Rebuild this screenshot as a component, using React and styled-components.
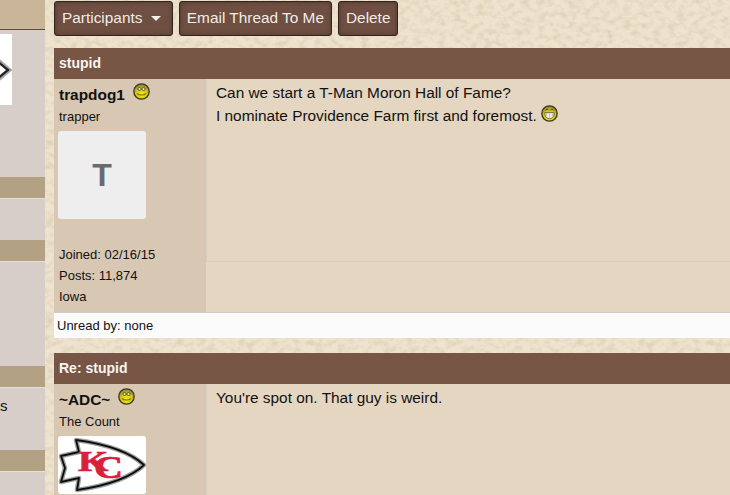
import React from "react";
import styled, { createGlobalStyle } from "styled-components";

const paper = `url("data:image/svg+xml,%3Csvg xmlns='http://www.w3.org/2000/svg' width='400' height='400'%3E%3Cfilter id='n' x='0' y='0' width='100%25' height='100%25'%3E%3CfeTurbulence type='fractalNoise' baseFrequency='0.13 0.17' numOctaves='3' seed='7' stitchTiles='stitch'/%3E%3CfeColorMatrix values='0 0 0 0 0.72 0 0 0 0 0.62 0 0 0 0 0.45 2 0 0 0 -0.82'/%3E%3C/filter%3E%3Crect width='400' height='400' fill='%23eee3cf'/%3E%3Crect width='400' height='400' filter='url(%23n)'/%3E%3C/svg%3E")`;

const GlobalStyle = createGlobalStyle`
  html, body {
    margin: 0;
    padding: 0;
    height: 495px;
    overflow: hidden;
  }
  body {
    font-family: "Liberation Sans", Arial, sans-serif;
    color: #111;
    background-color: #e8dbc5;
    background-image: ${paper};
  }
`;

const Page = styled.div`
  display: flex;
  width: 730px;
  height: 495px;
  overflow: hidden;
`;

const Sidebar = styled.aside`
  flex: none;
  width: 45px;
  display: flex;
  flex-direction: column;
  overflow: hidden;
`;

const SideTop = styled.div`
  flex: none;
  height: 29px;
  background: #c9b699;
  border-bottom: 1px solid #5e4a3c;
`;

const SidePanel = styled.div`
  flex: none;
  height: ${(p) => p.$h}px;
  background: #d7cdc9;
  font-size: 15px;
  overflow: hidden;
`;

const SideBand = styled.div`
  flex: none;
  height: 21px;
  background: #b3a184;
  border-bottom: 1px solid #e6e0da;
`;

const SideThumb = styled.div`
  width: 12px;
  height: 71px;
  margin-top: 4px;
  background: #fff;
  display: flex;
  align-items: center;
  justify-content: flex-end;
  overflow: hidden;
`;

const SideWord = styled.div`
  margin-top: 9px;
  line-height: 17px;
`;

const Main = styled.main`
  flex: 1;
  min-width: 0;
  margin-left: 9px;
  display: flex;
  flex-direction: column;
`;

const Toolbar = styled.div`
  display: flex;
  gap: 6px;
  padding-top: 1px;
  margin-bottom: 12px;
`;

const ToolButton = styled.button`
  height: 35px;
  padding: 0 7px 2px;
  display: flex;
  align-items: center;
  gap: 9px;
  background: #6e4f42;
  border: 1px solid #33241b;
  border-radius: 3px;
  box-shadow: inset 0 0 4px #4f372c;
  color: #f0ece6;
  font: 15.4px "Liberation Sans", Arial, sans-serif;
`;

const Caret = styled.span`
  width: 0;
  height: 0;
  margin: 2px 3.4px 0 0;
  border-left: 5px solid transparent;
  border-right: 5px solid transparent;
  border-top: 5px solid #f4f0ea;
`;

const Post = styled.section`
  flex: none;
  margin-bottom: 15px;
`;

const PostTitle = styled.h2`
  margin: 0;
  box-sizing: border-box;
  height: 31px;
  padding: 0 0 2px 5px;
  display: flex;
  align-items: center;
  background: #785645;
  color: #f8f5f0;
  font-size: 14px;
  font-weight: bold;
`;

const PostBody = styled.div`
  display: flex;
  height: ${(p) => p.$h}px;
  background: #e5d6c1;
`;

const UserCol = styled.div`
  flex: none;
  width: 152px;
  padding: 3px 0 0 5px;
  box-sizing: border-box;
  display: flex;
  flex-direction: column;
  background: #d8c8b3;
`;

const NameRow = styled.div`
  position: relative;
  box-sizing: border-box;
  height: 24px;
  padding-top: 2px;
  display: flex;
  align-items: center;
  font-size: 15.4px;
  font-weight: bold;
`;

const UserTitle = styled.div`
  margin-top: 2px;
  font-size: 13px;
  line-height: 17px;
`;

const Avatar = styled.div`
  width: 88px;
  height: 88px;
  margin: 6px 0 0 -1px;
  flex: none;
  display: flex;
  align-items: center;
  justify-content: center;
  border-radius: 3px;
  background: ${(p) => p.$bg};
  color: #6b6b6d;
  font-size: 32px;
  font-weight: bold;
  overflow: hidden;
`;

const LogoAvatar = styled(Avatar)`
  height: 58px;
`;

const UserMeta = styled.div`
  margin-top: auto;
  padding-bottom: 5px;
  font-size: 13px;
  line-height: 21px;
`;

const ContentCol = styled.div`
  flex: 1;
  min-width: 0;
  display: flex;
  flex-direction: column;
`;

const Message = styled.div`
  flex: 1;
  padding: 2px 0 0 9px;
  border-left: 1px solid #d6cbc4;
  font-size: 15.4px;
  line-height: 23px;
`;

const Signature = styled.div`
  flex: none;
  height: 50px;
  border-top: 1px solid #d6cbc8;
`;

const UnreadBar = styled.div`
  height: 25px;
  border-top: 1px solid #d6cbc8;
  padding-left: 3px;
  display: flex;
  align-items: center;
  background: #fbfbfb;
  font-size: 13px;
`;

function SmileFace({ grin, className }) {
  const fillId = grin ? "grinFill" : "smileFill";
  return (
    <svg className={className} width="17" height="17" viewBox="0 0 17 17">
      <defs>
        <radialGradient id={fillId} cx="50%" cy="68%" r="60%">
          <stop offset="0%" stopColor="#f7ea0a" />
          <stop offset="60%" stopColor="#d8c80e" />
          <stop offset="100%" stopColor="#8f8a2c" />
        </radialGradient>
      </defs>
      <circle cx="8.5" cy="8.5" r="7.7" fill={`url(#${fillId})`} stroke="#3b3a2a" strokeWidth="1.3" />
      {grin ? (
        <>
          <path d="M4.4 5.4c.6-1.4 2.6-1.4 3.2 0M9.4 5.4c.6-1.4 2.6-1.4 3.2 0" fill="none" stroke="#4a4820" strokeWidth="0.9" />
          <path d="M3.8 7.6h9.4c.2 3.6-1.8 6-4.7 6s-4.9-2.4-4.7-6z" fill="#f0f0e8" stroke="#55532a" strokeWidth="0.8" />
          <path d="M5.6 7.8v3.4M8.5 7.8v5M11.4 7.8v3.4" stroke="#a5a59a" strokeWidth="0.6" />
        </>
      ) : (
        <>
          <ellipse cx="6.5" cy="6" rx="1.6" ry="1.5" fill="#dfe0c8" stroke="#44421f" strokeWidth="0.8" />
          <ellipse cx="10.5" cy="6" rx="1.6" ry="1.5" fill="#dfe0c8" stroke="#44421f" strokeWidth="0.8" />
          <path d="M4 10.4c1.4 2.2 7.6 2.2 9 0" fill="none" stroke="#7c7515" strokeWidth="1.1" />
        </>
      )}
    </svg>
  );
}

const NameSmiley = styled(SmileFace)`
  position: absolute;
  left: ${(p) => p.$x}px;
  top: ${(p) => p.$y}px;
`;

const InlineSmiley = styled(SmileFace)`
  margin-left: 4px;
  vertical-align: -1px;
`;

function ChiefsLogo() {
  const outline = "M18 4 C40 7 70 14 86 29 C70 44 40 51 19 54 L21 42 L3 46 L7 32 L3 20 L21 16 Z";
  return (
    <svg width="88" height="58" viewBox="0 0 88 58">
      <defs>
        <filter id="soft" x="-5%" y="-5%" width="110%" height="110%">
          <feGaussianBlur stdDeviation="0.6" />
        </filter>
      </defs>
      <g filter="url(#soft)">
        <path d={outline} fill="#fff" stroke="#a0a0a0" strokeWidth="4.6" strokeLinejoin="round" />
        <path d={outline} fill="none" stroke="#111" strokeWidth="1.9" strokeLinejoin="round" />
      </g>
      <text
        transform="translate(20 35) scale(1.3 1)"
        fontFamily="Liberation Serif, serif"
        fontWeight="bold"
        fontSize="30"
        fill="#d9203a"
        stroke="#d9203a"
        strokeWidth="0.7"
      >
        K<tspan dx="-11" dy="7" fontSize="31">C</tspan>
      </text>
    </svg>
  );
}

export default function App() {
  return (
    <Page>
      <GlobalStyle />
      <Sidebar>
        <SideTop />
        <SidePanel $h={147}>
          <SideThumb>
            <svg width="12" height="30" viewBox="0 0 12 30">
              <defs>
                <filter id="thumbBlur" x="-20%" y="-20%" width="140%" height="140%">
                  <feGaussianBlur stdDeviation="0.6" />
                </filter>
              </defs>
              <g filter="url(#thumbBlur)" fill="none">
                <path d="M-3 3 L11 15 L-3 27" stroke="#aaa" strokeWidth="2" />
                <path d="M-3 6 L8 15 L-3 24" stroke="#222" strokeWidth="2.4" />
              </g>
            </svg>
          </SideThumb>
        </SidePanel>
        <SideBand />
        <SidePanel $h={41} />
        <SideBand />
        <SidePanel $h={104} />
        <SideBand />
        <SidePanel $h={62}>
          <SideWord>s</SideWord>
        </SidePanel>
        <SideBand />
        <SidePanel $h={23} />
      </Sidebar>
      <Main>
        <Toolbar>
          <ToolButton>
            Participants
            <Caret />
          </ToolButton>
          <ToolButton>Email Thread To Me</ToolButton>
          <ToolButton>Delete</ToolButton>
        </Toolbar>
        <Post>
          <PostTitle>stupid</PostTitle>
          <PostBody $h={233}>
            <UserCol>
              <NameRow>
                trapdog1
                <NameSmiley $x={74} $y={1} />
              </NameRow>
              <UserTitle>trapper</UserTitle>
              <Avatar $bg="#eeeeee">T</Avatar>
              <UserMeta>
                Joined: 02/16/15
                <br />
                Posts: 11,874
                <br />
                Iowa
              </UserMeta>
            </UserCol>
            <ContentCol>
              <Message>
                Can we start a T-Man Moron Hall of Fame?
                <br />
                I nominate Providence Farm first and foremost.
                <InlineSmiley grin />
              </Message>
              <Signature />
            </ContentCol>
          </PostBody>
          <UnreadBar>Unread by: none</UnreadBar>
        </Post>
        <Post>
          <PostTitle>Re: stupid</PostTitle>
          <PostBody $h={200}>
            <UserCol>
              <NameRow>
                ~ADC~
                <NameSmiley $x={59} $y={1} />
              </NameRow>
              <UserTitle>The Count</UserTitle>
              <LogoAvatar $bg="#ffffff">
                <ChiefsLogo />
              </LogoAvatar>
            </UserCol>
            <ContentCol>
              <Message>You're spot on. That guy is weird.</Message>
            </ContentCol>
          </PostBody>
        </Post>
      </Main>
    </Page>
  );
}
